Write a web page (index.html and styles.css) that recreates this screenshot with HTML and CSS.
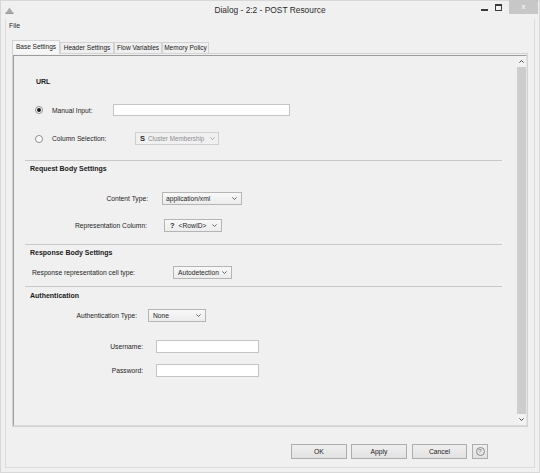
FILE: index.html
```html
<!DOCTYPE html>
<html>
<head>
<meta charset="utf-8">
<title>Dialog - 2:2 - POST Resource</title>
<link rel="stylesheet" href="styles.css">
</head>
<body>
<div class="window">
  <div class="titlebar">
    <svg class="app-icon" viewBox="0 0 9 7" width="9" height="7"><polygon points="4.5,0.5 1.5,5 7.5,5" fill="#a8a8a8"/><rect x="0.5" y="5.5" width="8" height="1.2" fill="#6f6f6f"/></svg>
    <span class="title">Dialog - 2:2 - POST Resource</span>
    <div class="win-ctrls">
      <span class="ctl-min"></span>
      <span class="ctl-max"></span>
      <span class="ctl-close">x</span>
    </div>
  </div>
  <div class="client">
    <div class="menubar"><span class="menu-item">File</span></div>
    <div class="tabs">
      <span class="tab tab-base active">Base Settings</span>
      <span class="tab tab-header">Header Settings</span>
      <span class="tab tab-flow">Flow Variables</span>
      <span class="tab tab-memory">Memory Policy</span>
    </div>
    <div class="panel">
      <div class="scrollpane">
        <div class="content">
          <div class="grp-title url-title">URL</div>
          <div class="row row-manual">
            <span class="radio on"></span>
            <span class="lbl lbl-manual">Manual Input:</span>
            <span class="field field-url"></span>
          </div>
          <div class="row row-column">
            <span class="radio"></span>
            <span class="lbl lbl-column">Column Selection:</span>
            <span class="combo combo-cluster disabled"><span class="combo-val"><b class="type-s">S</b><span class="cv-text cv-cluster">Cluster Membership</span></span><svg class="chev" viewBox="0 0 5 3" width="5" height="3"><polyline points="0.4,0.4 2.5,2.5 4.6,0.4" fill="none" stroke="#9a9a9a" stroke-width="0.8"/></svg></span>
          </div>
          <div class="sep sep-1"></div>

          <div class="grp-title req-title">Request Body Settings</div>
          <div class="row row-ct">
            <span class="lbl lbl-ct">Content Type:</span>
            <span class="combo combo-ct"><span class="combo-val">application/xml</span><svg class="chev" viewBox="0 0 5 3" width="5" height="3"><polyline points="0.4,0.4 2.5,2.5 4.6,0.4" fill="none" stroke="#444" stroke-width="0.8"/></svg></span>
          </div>
          <div class="row row-rep">
            <span class="lbl lbl-rep">Representation Column:</span>
            <span class="combo combo-rep"><span class="combo-val"><b class="type-q">?</b><span class="cv-text">&lt;RowID&gt;</span></span><svg class="chev" viewBox="0 0 5 3" width="5" height="3"><polyline points="0.4,0.4 2.5,2.5 4.6,0.4" fill="none" stroke="#444" stroke-width="0.8"/></svg></span>
          </div>
          <div class="sep sep-2"></div>

          <div class="grp-title resp-title">Response Body Settings</div>
          <div class="row row-resp">
            <span class="lbl lbl-resp">Response representation cell type:</span>
            <span class="combo combo-resp"><span class="combo-val">Autodetection</span><svg class="chev" viewBox="0 0 5 3" width="5" height="3"><polyline points="0.4,0.4 2.5,2.5 4.6,0.4" fill="none" stroke="#444" stroke-width="0.8"/></svg></span>
          </div>
          <div class="sep sep-3"></div>

          <div class="grp-title auth-title">Authentication</div>
          <div class="row row-auth">
            <span class="lbl lbl-auth">Authentication Type:</span>
            <span class="combo combo-auth"><span class="combo-val">None</span><svg class="chev" viewBox="0 0 5 3" width="5" height="3"><polyline points="0.4,0.4 2.5,2.5 4.6,0.4" fill="none" stroke="#444" stroke-width="0.8"/></svg></span>
          </div>
          <div class="row row-user">
            <span class="lbl lbl-cred">Username:</span>
            <span class="field field-cred"></span>
          </div>
          <div class="row row-pass">
            <span class="lbl lbl-cred">Password:</span>
            <span class="field field-cred"></span>
          </div>
        </div>
        <div class="scrollbar">
          <span class="sb-btn"><svg viewBox="0 0 5 3" width="5" height="3"><polyline points="0.4,2.6 2.5,0.5 4.6,2.6" fill="none" stroke="#333" stroke-width="0.9"/></svg></span>
          <span class="sb-thumb"></span>
          <span class="sb-btn"><svg viewBox="0 0 5 3" width="5" height="3"><polyline points="0.4,0.4 2.5,2.5 4.6,0.4" fill="none" stroke="#333" stroke-width="0.9"/></svg></span>
        </div>
      </div>
    </div>
    <div class="buttons">
      <span class="btn btn-ok">OK</span>
      <span class="btn btn-apply">Apply</span>
      <span class="btn btn-cancel">Cancel</span>
      <span class="btn btn-help"><span class="help-circle">?</span></span>
    </div>
  </div>
</div>
</body>
</html>
```
FILE: styles.css
```css
* { box-sizing: border-box; margin: 0; padding: 0; }
html, body { width: 540px; height: 473px; overflow: hidden; }
body {
  font-family: "Liberation Sans", Arial, sans-serif;
  font-size: 6.7px;
  color: #1e1e1e;
  background: #f0f0f0;
}
.window {
  width: 540px;
  height: 473px;
  border: 1px solid #d8d8d8;
  background: #f0f0f0;
  display: flex;
  flex-direction: column;
}

/* title bar */
.titlebar {
  height: 18px;
  display: grid;
  grid-template-columns: 1fr auto 1fr;
  align-items: start;
  flex: none;
}
.app-icon { margin: 6px 0 0 4px; display: block; }
.title { font-size: 8.4px; line-height: 18px; color: #2b2b2b; }
.win-ctrls {
  display: flex;
  justify-content: flex-end;
  align-items: flex-start;
  margin-right: 1px;
}
.ctl-min { width: 7px; height: 2px; background: #3a3a3a; margin-top: 8px; }
.ctl-max {
  width: 7px; height: 7px;
  border: 1px solid #3a3a3a; border-top-width: 2px;
  margin: 3px 0 0 7px;
}
.ctl-close {
  width: 29px; height: 14px;
  margin: -1px 0 0 7px;
  background: #c7c7c7;
  color: #fff;
  font-size: 8px;
  line-height: 13px;
  text-align: center;
}

/* client */
.client {
  flex: 1;
  margin: 0 4px 4px 4px;
  border: 1px solid #dcdcdc;
  border-top: none;
  display: flex;
  flex-direction: column;
}
.menubar { height: 14px; padding-left: 3px; line-height: 13px; font-size: 6.9px; }

.tabs {
  margin: 7px 0 0 6px;
  height: 13px;
  display: flex;
  align-items: flex-end;
}
.tab {
  height: 11px;
  border: 1px solid #d3d3d3;
  border-bottom: none;
  background: #efefef;
  font-size: 6.5px;
  line-height: 10px;
  text-align: center;
  color: #222;
}
.tab.active {
  height: 14px;
  line-height: 12px;
  background: #f6f6f6;
  margin-bottom: -1px;
  position: relative;
}
.tab-base { width: 48px; }
.tab-header { width: 54px; }
.tab-flow { width: 48px; }
.tab-memory { width: 47px; }

.panel {
  margin: 0 6px 0 6px;
  height: 374px;
  border: 1px solid #d3d3d3;
  padding-top: 1px;
  flex: none;
}
.scrollpane {
  height: 371px;
  display: flex;
  border-top: 1px solid #9d9d9d;
  border-left: 1px solid #9d9d9d;
  border-right: 1px solid #e4e4e4;
  border-bottom: 1px solid #dadada;
}
.content { flex: 1; display: flex; flex-direction: column; }

.scrollbar {
  width: 9px;
  display: flex;
  flex-direction: column;
  background: #f2f2f2;
}
.sb-btn {
  height: 11px;
  display: flex;
  align-items: center;
  justify-content: center;
}
.sb-btn svg { display: block; }
.sb-thumb { flex: 1; background: #cdcdcd; }

/* form content */
.grp-title {
  font-weight: bold;
  font-size: 7px;
  line-height: 10px;
  margin-left: 16px;
  color: #1a1a1a;
}
.url-title { margin-top: 21px; margin-left: 22px; }
.req-title { margin-top: 3px; }
.resp-title { margin-top: 3px; }
.auth-title { margin-top: 4px; }

.row { display: flex; align-items: center; height: 13px; }
.row-manual { margin-top: 17px; height: 12px; }
.row-column { margin-top: 16px; }
.row-ct { margin-top: 18px; }
.row-rep { margin-top: 14px; }
.row-resp { margin-top: 8px; }
.row-auth { margin-top: 8px; }
.row-user { margin-top: 18px; }
.row-pass { margin-top: 11px; }

.sep {
  height: 1px;
  background: #c9c9c9;
  margin-left: 11px;
  width: 477px;
}
.sep-1 { margin-top: 15px; }
.sep-2 { margin-top: 12px; }
.sep-3 { margin-top: 7px; }

.radio {
  width: 8px; height: 8px;
  border-radius: 50%;
  border: 1px solid #8c8c8c;
  background: #fff;
  margin-left: 21px;
  display: flex;
  align-items: center;
  justify-content: center;
  flex: none;
}
.radio.on::after {
  content: "";
  width: 4px; height: 4px;
  border-radius: 50%;
  background: #1a1a1a;
}

.lbl { flex: none; white-space: nowrap; }
.lbl-manual { margin-left: 9px; width: 61px; }
.lbl-column { margin-left: 9px; width: 83px; }
.lbl-ct { width: 134px; text-align: right; }
.lbl-rep { width: 133px; text-align: right; }
.lbl-resp { margin-left: 18px; width: 141px; }
.lbl-auth { width: 123px; text-align: right; }
.lbl-cred { width: 129px; text-align: right; }

.field {
  height: 12px;
  background: #fff;
  border: 1px solid #c4c4c4;
  flex: none;
}
.field-url { width: 177px; }
.field-cred { width: 103px; height: 13px; margin-left: 13px; }

.combo {
  height: 13px;
  border: 1px solid #b5b5b5;
  background: linear-gradient(#f8f8f8, #ececec);
  display: flex;
  align-items: center;
  justify-content: space-between;
  padding: 0 4px 0 3px;
  flex: none;
  white-space: nowrap;
}
.combo .chev { display: block; flex: none; }
.combo-val { display: flex; align-items: center; }
.combo.disabled {
  background: #f0f0f0;
  border-color: #cfcfcf;
  color: #8d8d8d;
}
.type-s { color: #2a2a2a; font-size: 7.5px; margin-right: 3px; }
.type-q { color: #2a2a2a; font-size: 7.5px; margin-right: 4px; }
.cv-cluster { font-size: 6.3px; }
.combo-cluster { width: 84px; padding: 0 3px 0 4px; }
.combo-ct { width: 80px; margin-left: 14px; }
.combo-rep { width: 58px; margin-left: 17px; padding-left: 5px; }
.combo-resp { width: 59px; padding-left: 4px; }
.combo-auth { width: 58px; margin-left: 11px; padding-left: 4px; }

/* buttons */
.buttons {
  margin-top: 17px;
  display: flex;
  justify-content: flex-end;
  padding-right: 46px;
}
.btn {
  height: 15px;
  border: 1px solid #adadad;
  background: linear-gradient(#efefef, #e2e2e2);
  font-size: 6.8px;
  line-height: 13px;
  text-align: center;
  color: #1e1e1e;
}
.btn-ok { width: 56px; }
.btn-apply { width: 56px; margin-left: 4px; }
.btn-cancel { width: 55px; margin-left: 5px; }
.btn-help {
  width: 16px;
  margin-left: 5px;
  display: flex;
  align-items: center;
  justify-content: center;
}
.help-circle {
  width: 9px; height: 9px;
  border: 1px solid #8a8a8a;
  border-radius: 50%;
  font-size: 6px;
  line-height: 7px;
  text-align: center;
  color: #6a6a6a;
}
```
